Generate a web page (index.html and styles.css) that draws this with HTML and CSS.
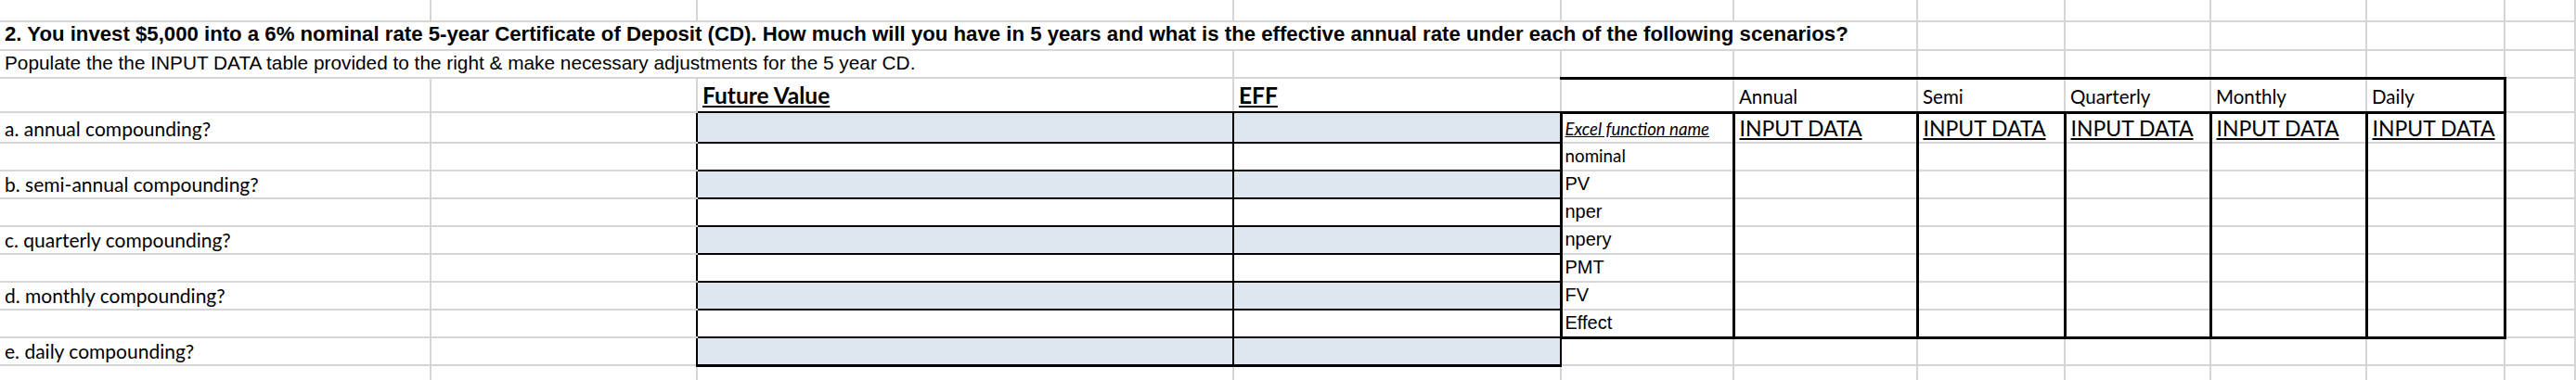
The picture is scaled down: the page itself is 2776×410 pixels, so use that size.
FILE: index.html
```html
<!DOCTYPE html>
<html lang="en">
<head>
<meta charset="utf-8">
<title>CD compounding worksheet</title>
<link rel="stylesheet" href="styles.css">
</head>
<body>
<table class="sheet">
  <colgroup>
    <col class="c-a"><col class="c-b"><col class="c-c"><col class="c-d"><col class="c-e"><col class="c-f">
    <col class="c-g"><col class="c-h"><col class="c-i"><col class="c-j"><col class="c-k"><col class="c-l">
  </colgroup>
  <tbody>
    <tr class="r-first">
      <td></td><td></td><td></td><td></td><td></td><td></td><td></td><td></td><td></td><td></td><td></td><td></td>
    </tr>
    <tr class="r-std">
      <td colspan="6" class="title">2. You invest $5,000 into a 6% nominal rate 5-year Certificate of Deposit (CD). How much will you have in 5 years and what is the effective annual rate under each of the following scenarios?</td>
      <td></td><td></td><td></td><td></td><td></td><td></td>
    </tr>
    <tr class="r-std">
      <td colspan="3" class="sub">Populate the the INPUT DATA table provided to the right &amp; make necessary adjustments for the 5 year CD.</td>
      <td></td><td></td><td></td><td></td><td></td><td></td><td></td><td></td><td></td>
    </tr>
    <tr class="r-head">
      <td></td><td></td>
      <td class="hd edge-b">Future Value</td>
      <td class="hd edge-b">EFF</td>
      <td class="rt-head"></td>
      <td class="rt-head colhd">Annual</td>
      <td class="rt-head colhd">Semi</td>
      <td class="rt-head colhd">Quarterly</td>
      <td class="rt-head colhd">Monthly</td>
      <td class="rt-head rt-end colhd">Daily</td>
      <td></td><td></td>
    </tr>
    <tr class="r-input">
      <td class="lbl">a. annual compounding?</td><td class="edge-r"></td>
      <td class="fv blue"></td><td class="fv blue"></td>
      <td class="rt fn-cell"><span class="fn">Excel function name</span></td>
      <td class="rt input">INPUT DATA</td>
      <td class="rt input">INPUT DATA</td>
      <td class="rt input">INPUT DATA</td>
      <td class="rt input">INPUT DATA</td>
      <td class="rt input">INPUT DATA</td>
      <td></td><td></td>
    </tr>
    <tr class="r-std">
      <td></td><td class="edge-r"></td>
      <td class="fv"></td><td class="fv"></td>
      <td class="rt fn-cell nom">nominal</td>
      <td class="rt"></td><td class="rt"></td><td class="rt"></td><td class="rt"></td><td class="rt"></td>
      <td></td><td></td>
    </tr>
    <tr class="r-std">
      <td class="lbl">b. semi-annual compounding?</td><td class="edge-r"></td>
      <td class="fv blue"></td><td class="fv blue"></td>
      <td class="rt fn-cell ar">PV</td>
      <td class="rt"></td><td class="rt"></td><td class="rt"></td><td class="rt"></td><td class="rt"></td>
      <td></td><td></td>
    </tr>
    <tr class="r-std">
      <td></td><td class="edge-r"></td>
      <td class="fv"></td><td class="fv"></td>
      <td class="rt fn-cell ar">nper</td>
      <td class="rt"></td><td class="rt"></td><td class="rt"></td><td class="rt"></td><td class="rt"></td>
      <td></td><td></td>
    </tr>
    <tr class="r-std">
      <td class="lbl">c. quarterly compounding?</td><td class="edge-r"></td>
      <td class="fv blue"></td><td class="fv blue"></td>
      <td class="rt fn-cell ar">npery</td>
      <td class="rt"></td><td class="rt"></td><td class="rt"></td><td class="rt"></td><td class="rt"></td>
      <td></td><td></td>
    </tr>
    <tr class="r-std">
      <td></td><td class="edge-r"></td>
      <td class="fv"></td><td class="fv"></td>
      <td class="rt fn-cell ar">PMT</td>
      <td class="rt"></td><td class="rt"></td><td class="rt"></td><td class="rt"></td><td class="rt"></td>
      <td></td><td></td>
    </tr>
    <tr class="r-std">
      <td class="lbl">d. monthly compounding?</td><td class="edge-r"></td>
      <td class="fv blue"></td><td class="fv blue"></td>
      <td class="rt fn-cell ar">FV</td>
      <td class="rt"></td><td class="rt"></td><td class="rt"></td><td class="rt"></td><td class="rt"></td>
      <td></td><td></td>
    </tr>
    <tr class="r-std">
      <td></td><td class="edge-r"></td>
      <td class="fv"></td><td class="fv"></td>
      <td class="rt rt-foot fn-cell ar">Effect</td>
      <td class="rt rt-foot"></td><td class="rt rt-foot"></td><td class="rt rt-foot"></td><td class="rt rt-foot"></td><td class="rt rt-foot"></td>
      <td></td><td></td>
    </tr>
    <tr class="r-std">
      <td class="lbl">e. daily compounding?</td><td class="edge-r"></td>
      <td class="fv blue fv-last"></td><td class="fv blue fv-last"></td>
      <td></td><td></td><td></td><td></td><td></td><td></td><td></td><td></td>
    </tr>
    <tr class="r-last">
      <td></td><td></td><td></td><td></td><td></td><td></td><td></td><td></td><td></td><td></td><td></td><td></td>
    </tr>
  </tbody>
</table>
</body>
</html>
```

FILE: styles.css
```css
html, body {
  margin: 0;
  padding: 0;
  background: #ffffff;
}

body {
  width: 2776px;
  height: 410px;
  overflow: hidden;
}

.sheet {
  border-collapse: collapse;
  table-layout: fixed;
  width: 2776px;
}

.c-a { width: 464px; }
.c-b { width: 287px; }
.c-c { width: 578px; }
.c-d { width: 353px; }
.c-e { width: 186px; }
.c-f { width: 198px; }
.c-g { width: 159px; }
.c-h { width: 157px; }
.c-i { width: 168px; }
.c-j { width: 149px; }
.c-k { width: 76px; }
.c-l { width: 1px; }

.r-first { height: 23px; }
.r-std { height: 30px; }
.r-head { height: 37px; }
.r-input { height: 33px; }
.r-last { height: 17px; }

.sheet td {
  border: 2px solid #d6d6d6;
  padding: 0 5px 3px 5px;
  vertical-align: bottom;
  white-space: nowrap;
  overflow: visible;
  font-family: Lato, "Carlito", Calibri, sans-serif;
  font-size: 21px;
  color: #000000;
  line-height: normal;
}

.sheet td:last-child { padding: 0; }
.r-first td { border-top: none; }
.r-last td { border-bottom: none; }
.sheet tr td:first-child { border-left: none; }

.sheet td.title {
  font-family: "Liberation Sans", Arial, sans-serif;
  font-weight: 700;
  font-size: 22.2px;
}

.sheet td.sub {
  font-family: "Liberation Sans", Arial, sans-serif;
  font-size: 20.8px;
}

.sheet td.lbl {
  font-size: 21px;
  padding-bottom: 2px;
}

.sheet td.hd {
  font-weight: 700;
  font-size: 24.5px;
  text-decoration: underline;
  padding-bottom: 3px;
}

.sheet td.colhd {
  font-size: 20.5px;
  padding-bottom: 4px;
}

.sheet td.input {
  font-size: 23px;
  text-decoration: underline;
  padding-bottom: 1px;
}

.sheet td.fn-cell { padding-left: 3px; }

.fn {
  font-style: italic;
  font-size: 18.6px;
  text-decoration: underline;
}

.sheet td.nom {
  font-size: 18.8px;
  padding-bottom: 4px;
}

.sheet td.ar {
  font-family: "Liberation Sans", Arial, sans-serif;
  font-size: 20px;
  padding-bottom: 3px;
}

/* Future value / EFF answer grid */
.sheet td.fv { border: 2px solid #000000; }
.sheet td.blue { background: #dee6f0; }
.sheet td.fv-last { border-bottom: 3px solid #000000; }
.sheet td.edge-r { border-right-color: #000000; }
.sheet td.edge-b { border-bottom-color: #000000; }

/* INPUT DATA table */
.sheet td.rt-head {
  border-top: 3px solid #000000;
  border-bottom: 3px solid #000000;
}
.sheet td.rt-end { border-right: 3px solid #000000; }
.sheet td.rt {
  border-left: 3px solid #000000;
  border-right: 3px solid #000000;
}
.sheet td.rt-foot { border-bottom: 3px solid #000000; }
```
